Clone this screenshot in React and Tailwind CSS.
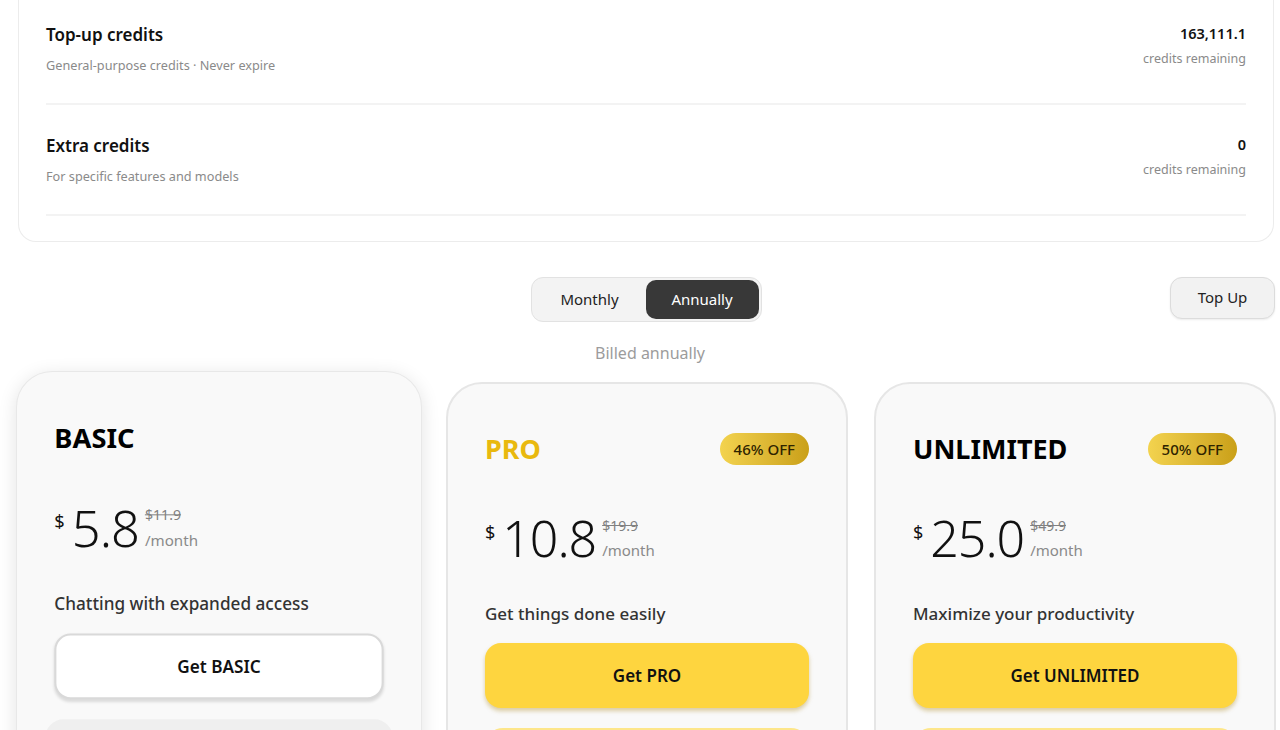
import { useState } from 'react';

const font = { fontFamily: '"Noto Sans", "Open Sans", sans-serif' };

const credits = [
  { title: 'Top-up credits', desc: 'General-purpose credits · Never expire', value: '163,111.1' },
  { title: 'Extra credits', desc: 'For specific features and models', value: '0' },
];

const plans = [
  { name: 'BASIC', price: '5.8', old: '$11.9', tagline: 'Chatting with expanded access', badge: null, highlight: false },
  { name: 'PRO', price: '10.8', old: '$19.9', tagline: 'Get things done easily', badge: '46% OFF', highlight: true, gold: true },
  { name: 'UNLIMITED', price: '25.0', old: '$49.9', tagline: 'Maximize your productivity', badge: '50% OFF', highlight: true },
];

function PlanCard({ plan, active }) {
  return (
    <div
      className={
        'rounded-[36px] bg-[#f9f9f9] px-[37px] pt-[47px] h-[420px] overflow-hidden ' +
        (active
          ? 'border border-[#e8e8e8] shadow-[0_4px_18px_rgba(0,0,0,0.10)] scale-[1.01] -translate-y-[9px]'
          : 'border-2 border-[#e6e6e6]')
      }
    >
      {/* Header */}
      <div className="flex items-center justify-between h-[36px]">
        <h2 className={'text-[27px] font-bold leading-[36px] ' + (plan.gold ? 'text-[#e9b90f]' : 'text-black')}>{plan.name}</h2>
        {plan.badge && (
          <span className="h-[32px] px-[14px] flex items-center rounded-full bg-gradient-to-r from-[#f3d34e] to-[#caa017] text-[15px] font-medium text-[#2e2400]">
            {plan.badge}
          </span>
        )}
      </div>

      {/* Price */}
      <div className="flex items-end mt-[46px] text-[#111]">
        <span className="self-start text-[18px] leading-none mt-[10px] mr-[7px]">$</span>
        <span className="text-[50px] leading-[50px] font-light tracking-[-1px]">{plan.price}</span>
        <div className="flex flex-col ml-[6px] pb-[3px]">
          <span className="text-[14px] leading-[14px] mb-[7px] text-[#808080] line-through">{plan.old}</span>
          <span className="text-[15px] leading-[20px] text-[#8a8a8a]">/month</span>
        </div>
      </div>

      <p className="mt-[39px] text-[17px] leading-[24px] font-medium text-[#333]">{plan.tagline}</p>

      <button
        className={
          'mt-[17px] w-full h-[65px] rounded-[16px] text-[17px] font-semibold text-[#111] ' +
          (plan.highlight
            ? 'bg-[#fed53f] shadow-[0_3px_4px_rgba(160,120,0,0.35)]'
            : 'bg-white border-2 border-[#d9d9d9] shadow-[0_2px_3px_rgba(0,0,0,0.12)]')
        }
      >
        Get {plan.name}
      </button>

      <div
        className={
          'mt-[20px] h-[120px] rounded-[18px] ' +
          (plan.highlight ? 'bg-[#fff3c2] border-t-4 border-[#fde68a]' : 'bg-[#efefef] -mx-[9px]')
        }
      />
    </div>
  );
}

export default function App() {
  const [billing, setBilling] = useState('annually');

  return (
    <div className="min-h-screen bg-white overflow-hidden" style={font}>
      {/* Credits card */}
      <div className="ml-[18px] mr-[6px] -mt-[6px] rounded-b-[18px] border border-t-0 border-[#ececec] px-[27px] pb-[25px]">
        {credits.map((c) => (
          <div key={c.title} className="flex justify-between items-start pt-[30px] pb-[29px] border-b-2 border-[#f3f3f3]">
            <div>
              <div className="text-[17px] leading-[22px] font-semibold text-[#111]">{c.title}</div>
              <div className="mt-[10px] text-[12.7px] leading-[18px] text-[#8a8a8a]">{c.desc}</div>
            </div>
            <div className="text-right -mt-[1px]">
              <div className="text-[14.5px] leading-[20px] font-semibold text-[#111]">{c.value}</div>
              <div className="mt-[7px] text-[12.5px] leading-[18px] text-[#8a8a8a]">credits remaining</div>
            </div>
          </div>
        ))}
      </div>

      {/* Billing toggle */}
      <div className="grid grid-cols-[1fr_auto_1fr] items-center mt-[35px] pl-[17px] pr-[5px]">
        <div />
        <div className="flex p-[2px] rounded-[12px] bg-[#f3f3f3] border border-[#e2e2e2]">
          <button
            onClick={() => setBilling('monthly')}
            className={
              'w-[112px] h-[39px] rounded-[10px] text-[15px] ' +
              (billing === 'monthly' ? 'bg-[#383838] text-white' : 'text-[#222]')
            }
          >
            Monthly
          </button>
          <button
            onClick={() => setBilling('annually')}
            className={
              'w-[113px] h-[39px] rounded-[10px] text-[15px] ' +
              (billing === 'annually' ? 'bg-[#383838] text-white' : 'text-[#222]')
            }
          >
            Annually
          </button>
        </div>
        <div className="flex justify-end">
          <button className="-mt-[4px] w-[105px] h-[42px] rounded-[12px] bg-[#f2f2f2] border border-[#dcdcdc] shadow-[0_1px_2px_rgba(0,0,0,0.08)] text-[15px] text-[#222]">
            Top Up
          </button>
        </div>
      </div>

      <p className="mt-[19px] text-center pl-[20px] text-[16px] leading-[24px] text-[#9c9c9c]">
        {billing === 'annually' ? 'Billed annually' : 'Billed monthly'}
      </p>

      {/* Plans */}
      <div className="grid grid-cols-3 gap-[26px] mt-[17px] pl-[18px] pr-[4px]">
        {plans.map((p, i) => (
          <PlanCard key={p.name} plan={p} active={i === 0} />
        ))}
      </div>
    </div>
  );
}
